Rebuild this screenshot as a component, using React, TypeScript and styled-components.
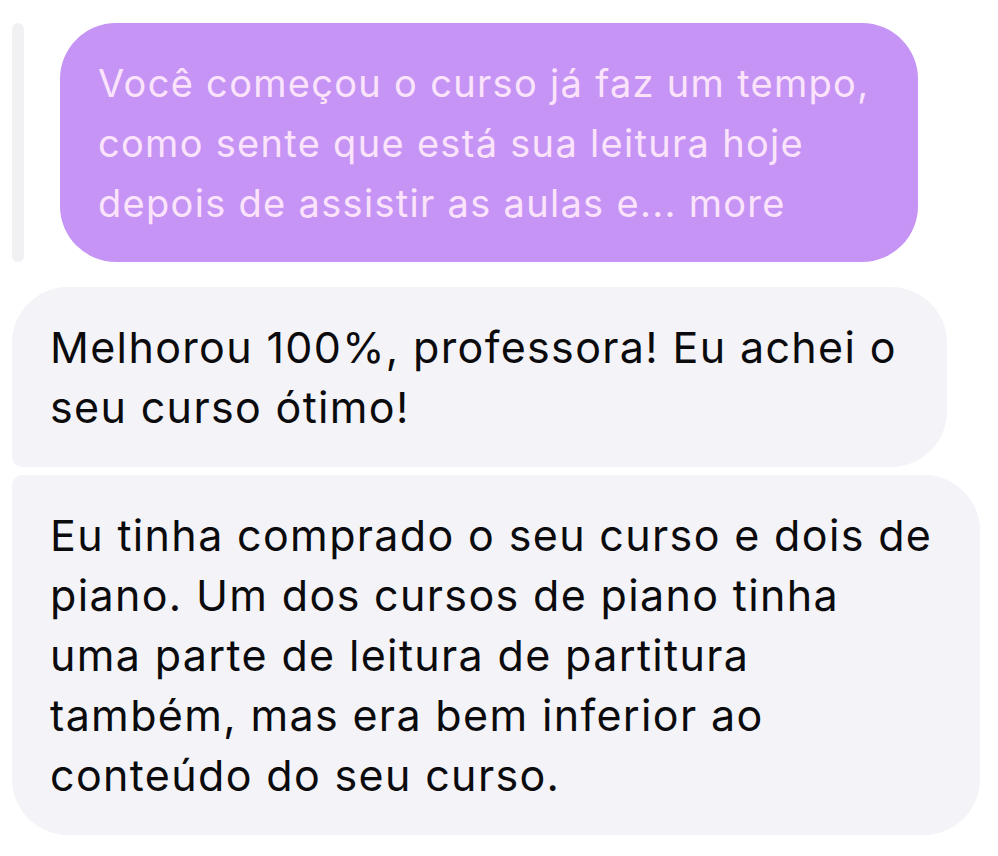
import styled, { createGlobalStyle } from "styled-components";

const GlobalStyle = createGlobalStyle`
  html, body {
    margin: 0;
    padding: 0;
    background: #ffffff;
  }
  body {
    font-family: Inter, "Noto Sans", "Liberation Sans", sans-serif;
    -webkit-font-smoothing: antialiased;
  }
`;

const Thread = styled.div`
  display: flex;
  flex-direction: column;
  align-items: flex-start;
  padding: 23px 0 0 12px;
`;

const QuoteRow = styled.div`
  display: flex;
  gap: 36px;
  margin-bottom: 25px;
`;

const QuoteBar = styled.div`
  width: 12px;
  border-radius: 6px;
  background: #f1f1f3;
`;

const QuotedBubble = styled.div`
  width: 858px;
  box-sizing: border-box;
  padding: 30px 38px 29px;
  border-radius: 56px;
  background: #c594f5;
  color: #fbe4fb;
  font-size: 38px;
  letter-spacing: 1.3px;
  line-height: 60px;
`;

type Corner = "top" | "bottom";

interface BubbleProps {
  $width: number;
  $tail: Corner;
}

const Bubble = styled.div<BubbleProps>`
  width: ${({ $width }) => $width}px;
  box-sizing: border-box;
  padding: 30px 38px;
  background: #f3f3f8;
  color: #0b0b0d;
  font-size: 43px;
  letter-spacing: 1.35px;
  line-height: 60px;
  border-radius: ${({ $tail }) =>
    $tail === "bottom" ? "56px 56px 56px 10px" : "10px 56px 56px 56px"};
  & + & {
    margin-top: 8px;
  }
`;

const Line = styled.span`
  display: block;
  white-space: nowrap;
`;

const quoted = [
  "Você começou o curso já faz um tempo,",
  "como sente que está sua leitura hoje",
  "depois de assistir as aulas e... more",
];

const first = ["Melhorou 100%, professora! Eu achei o", "seu curso ótimo!"];

const second = [
  "Eu tinha comprado o seu curso e dois de",
  "piano. Um dos cursos de piano tinha",
  "uma parte de leitura de partitura",
  "também, mas era bem inferior ao",
  "conteúdo do seu curso.",
];

export default function App() {
  return (
    <>
      <GlobalStyle />
      <Thread>
        <QuoteRow>
          <QuoteBar />
          <QuotedBubble>
            {quoted.map((l) => (
              <Line key={l}>{l}</Line>
            ))}
          </QuotedBubble>
        </QuoteRow>
        <Bubble $width={935} $tail="bottom">
          {first.map((l) => (
            <Line key={l}>{l}</Line>
          ))}
        </Bubble>
        <Bubble $width={968} $tail="top">
          {second.map((l) => (
            <Line key={l}>{l}</Line>
          ))}
        </Bubble>
      </Thread>
    </>
  );
}
